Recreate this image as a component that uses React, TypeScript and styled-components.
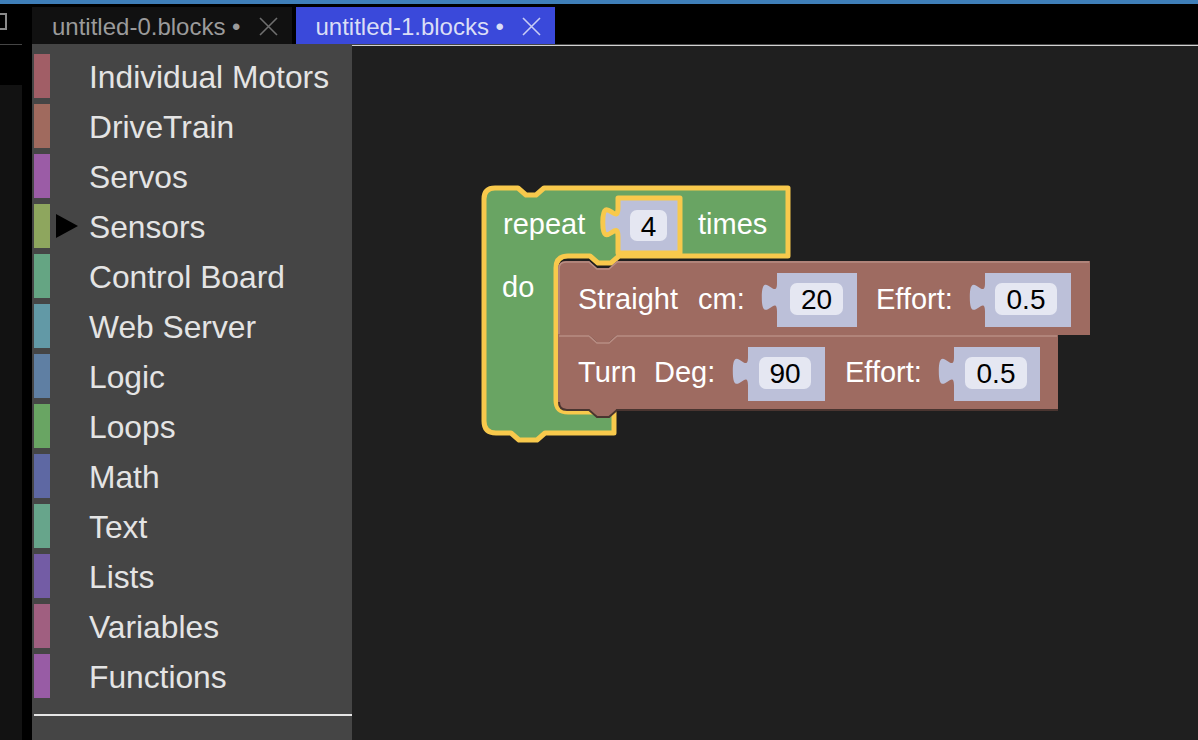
import React from 'react';
import styled, { createGlobalStyle } from 'styled-components';

const Global = createGlobalStyle`
  html, body { margin: 0; padding: 0; background: #000; }
  body { width: 1198px; height: 740px; overflow: hidden; font-family: "Liberation Sans", Arial, sans-serif; }
  * { box-sizing: border-box; }
`;

const Screen = styled.div`
  width: 1198px;
  height: 740px;
  display: flex;
  flex-direction: column;
  background: #000;
  overflow: hidden;
`;

const TopStrip = styled.div`
  flex: none;
  height: 4px;
  background: #3f7fb9;
`;

const TabBar = styled.div`
  flex: none;
  height: 40px;
  display: flex;
  align-items: flex-end;
  background: #000;
`;

const Stub = styled.div`
  width: 22px;
  height: 100%;
  overflow: hidden;
  display: flex;
  align-items: flex-start;
  padding-top: 9px;
`;

const StubIcon = styled.div`
  width: 17px;
  height: 17px;
  margin-left: -10px;
  border: 2px solid #8a8a8a;
`;

const TabList = styled.div`
  display: flex;
  gap: 4px;
  margin-left: 10px;
`;

const Tab = styled.div<{ $active?: boolean }>`
  height: 37px;
  display: flex;
  align-items: center;
  gap: 18px;
  padding: 2px 14px 0 20px;
  background: ${(p) => (p.$active ? '#3a49da' : '#111111')};
  color: ${(p) => (p.$active ? '#dadef6' : '#9b9b9b')};
  font-size: 24px;
  white-space: pre;
`;

const Body = styled.div`
  flex: 1;
  display: flex;
  min-height: 0;
`;

const Gutter = styled.div`
  width: 22px;
  display: flex;
  flex-direction: column;
  border-top: 1px solid #454545;
`;

const GutterTop = styled.div`
  height: 40px;
  background: #000;
`;

const GutterRest = styled.div`
  flex: 1;
  background: #121212;
`;

const Rail = styled.div`
  width: 10px;
  background: #000;
`;

const Flyout = styled.div`
  width: 320px;
  background: #454545;
  display: flex;
  flex-direction: column;
  padding: 10px 0 0 2px;
`;

const CategoryList = styled.div`
  display: flex;
  flex-direction: column;
  gap: 6px;
`;

const Category = styled.div`
  height: 44px;
  display: flex;
  align-items: center;
`;

const Swatch = styled.div<{ $color: string }>`
  width: 16px;
  align-self: stretch;
  background: ${(p) => p.$color};
`;

const ArrowSlot = styled.div`
  width: 39px;
  height: 100%;
  display: flex;
  align-items: center;
  padding-left: 6px;
`;

const CategoryLabel = styled.span`
  font-size: 31.75px;
  color: #e4e4e4;
  padding-top: 3px;
  white-space: pre;
`;

const Divider = styled.div`
  margin-top: 16px;
  height: 2px;
  background: #e6e6e6;
`;

const Workspace = styled.div`
  flex: 1;
  background: #1f1f1f;
  border-top: 1px solid #454545;
  box-shadow: inset 0 1px 0 #d2d2d2;
`;

const Canvas = styled.svg`
  display: block;
`;

const categories: { name: string; color: string; selected?: boolean }[] = [
  { name: 'Individual Motors', color: '#a15e66' },
  { name: 'DriveTrain', color: '#a06a5e' },
  { name: 'Servos', color: '#9b5ca6' },
  { name: 'Sensors', color: '#8ea65e', selected: true },
  { name: 'Control Board', color: '#65a583' },
  { name: 'Web Server', color: '#6299a6' },
  { name: 'Logic', color: '#5f7fa3' },
  { name: 'Loops', color: '#69a563' },
  { name: 'Math', color: '#5e68a3' },
  { name: 'Text', color: '#67a58b' },
  { name: 'Lists', color: '#735ca5' },
  { name: 'Variables', color: '#a05f80' },
  { name: 'Functions', color: '#985ca5' },
];

const CloseIcon = ({ color }: { color: string }) => (
  <svg width="19" height="19" viewBox="0 0 19 19">
    <path d="M1 1 L18 18 M18 1 L1 18" stroke={color} strokeWidth="1.6" fill="none" />
  </svg>
);

const Arrow = () => (
  <svg width="22" height="24" viewBox="0 0 22 24">
    <polygon points="0,0 22,12 0,24" fill="#000" />
  </svg>
);

const GREEN = '#69a463';
const YELLOW = '#f8c94c';
const BROWN = '#9e6b61';
const LAVENDER = '#bcc0d9';
const FIELD = '#e5e7f2';

const tabUp = 'c 0,-19 -15.2,15.2 -15.2,-14.25 s 15.2,4.75 15.2,-14.25';

function inputPath(x0: number, x1: number, y0: number, y1: number) {
  return `M ${x0},${y0} H ${x1} V ${y1} H ${x0} V ${y0 + 38.5} ${tabUp} V ${y0} Z`;
}

type InputProps = {
  x0: number; x1: number; y0: number; y1: number;
  fx0: number; fx1: number; fy0: number; fy1: number;
  value: string; baseline: number; outlined?: boolean;
};

const ValueInput = ({ x0, x1, y0, y1, fx0, fx1, fy0, fy1, value, baseline, outlined }: InputProps) => (
  <g>
    <path
      d={inputPath(x0, x1, y0, y1)}
      fill={LAVENDER}
      stroke={outlined ? YELLOW : 'none'}
      strokeWidth={outlined ? 5 : 0}
      strokeLinejoin="round"
    />
    <rect x={fx0} y={fy0} width={fx1 - fx0} height={fy1 - fy0} rx="7" fill={FIELD} />
    <text x={(fx0 + fx1) / 2} y={baseline} textAnchor="middle" fontSize="28" fill="#000" fontFamily="'Liberation Sans', Arial, sans-serif">
      {value}
    </text>
  </g>
);

const Label = ({ x, y, children }: { x: number; y: number; children: React.ReactNode }) => (
  <text x={x} y={y} fontSize="29" fill="#fff" fontFamily="'Liberation Sans', Arial, sans-serif">
    {children}
  </text>
);

const repeatPath = [
  'M 484,199',
  'Q 484,188 495,188',
  'H 518 L 526,195 H 536 L 544,188',
  'H 788 V 256',
  'H 619 L 611,263 H 598 L 590,256',
  'H 568 Q 556,256 556,268',
  'V 400 Q 556,412 568,412',
  'H 614 V 433',
  'H 545 L 537,440 H 519 L 511,433',
  'H 496 Q 484,433 484,421 Z',
].join(' ');

const straightPath =
  'M 558,269 Q 558,261 566,261 H 589 L 597,268 H 609 L 617,261 H 1090 V 335 H 617 L 609,342 H 597 L 589,335 H 558 Z';

const turnPath =
  'M 558,335 H 589 L 597,342 H 609 L 617,335 H 1058 V 409 H 617 L 609,416 H 597 L 589,409 H 566 Q 558,409 558,401 Z';

const Blocks = () => (
  <Canvas width="846" height="695" viewBox="352 45 846 695">
    <path d={repeatPath} fill={GREEN} stroke={YELLOW} strokeWidth="5" strokeLinejoin="round" />
    <Label x={503} y={234}>repeat</Label>
    <ValueInput x0={618} x1={680} y0={198} y1={253} fx0={630} fx1={667} fy0={210} fy1={241} value="4" baseline={236} outlined />
    <Label x={698} y={234}>times</Label>
    <Label x={502} y={297}>do</Label>

    <path d={straightPath} fill={BROWN} />
    <path d="M 559,334 V 269 Q 559,262 566,262 H 589 L 597,269 H 609 L 617,262 H 1089" fill="none" stroke="#b88d83" strokeWidth="1.5" />
    <Label x={578} y={309}>Straight</Label>
    <Label x={698} y={309}>cm:</Label>
    <ValueInput x0={777} x1={857} y0={273} y1={327} fx0={790} fx1={843} fy0={283} fy1={315} value="20" baseline={309} />
    <Label x={876} y={309}>Effort:</Label>
    <ValueInput x0={985} x1={1071} y0={273} y1={327} fx0={995} fx1={1057} fy0={283} fy1={315} value="0.5" baseline={309} />

    <path d={turnPath} fill={BROWN} />
    <path d="M 559,336 H 589 L 597,343 H 609 L 617,336 H 1057" fill="none" stroke="#b88d83" strokeWidth="1.5" />
    <path d="M 559,402 Q 559,410 567,410 H 589 L 597,417 H 609 L 617,410 H 1058" fill="none" stroke="#4a3530" strokeWidth="2" />
    <Label x={578} y={382}>Turn</Label>
    <Label x={654} y={382}>Deg:</Label>
    <ValueInput x0={748} x1={825} y0={347} y1={401} fx0={759} fx1={811} fy0={357} fy1={389} value="90" baseline={383} />
    <Label x={845} y={382}>Effort:</Label>
    <ValueInput x0={954} x1={1040} y0={347} y1={401} fx0={965} fx1={1027} fy0={357} fy1={389} value="0.5" baseline={383} />
  </Canvas>
);

export default function App() {
  return (
    <Screen>
      <Global />
      <TopStrip />
      <TabBar>
        <Stub>
          <StubIcon />
        </Stub>
        <TabList>
          <Tab>
            <span>untitled-0.blocks •</span>
            <CloseIcon color="#6f6f6f" />
          </Tab>
          <Tab $active>
            <span>untitled-1.blocks •</span>
            <CloseIcon color="#c9cdf5" />
          </Tab>
        </TabList>
      </TabBar>
      <Body>
        <Gutter>
          <GutterTop />
          <GutterRest />
        </Gutter>
        <Rail />
        <Flyout>
          <CategoryList>
            {categories.map((c) => (
              <Category key={c.name}>
                <Swatch $color={c.color} />
                <ArrowSlot>{c.selected ? <Arrow /> : null}</ArrowSlot>
                <CategoryLabel>{c.name}</CategoryLabel>
              </Category>
            ))}
          </CategoryList>
          <Divider />
        </Flyout>
        <Workspace>
          <Blocks />
        </Workspace>
      </Body>
    </Screen>
  );
}
